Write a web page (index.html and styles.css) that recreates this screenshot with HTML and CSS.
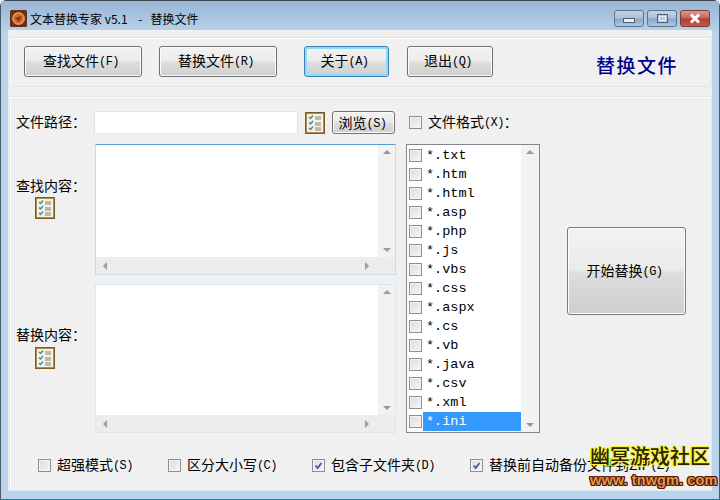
FILE: index.html
```html
<!DOCTYPE html>
<html lang="zh">
<head>
<meta charset="utf-8">
<title>文本替换专家</title>
<link rel="stylesheet" href="styles.css">
</head>
<body>
<svg class="defs" width="0" height="0">
  <symbol id="list" viewBox="0 0 20 22">
    <rect x="0.5" y="0.5" width="19" height="21" fill="#f4f1e6" stroke="#7d5a26"/>
    <rect x="1.5" y="1.5" width="17" height="19" fill="none" stroke="#b08a4c"/>
    <path d="M4 5l1.500 1.500L8 3.500M4 10.500l1.500 1.500L8 9M4 16l1.500 1.500L8 14.500" fill="none" stroke="#3f8ea6" stroke-width="1.500"/>
    <path d="M10 5h6M10 7h6M10 11h6M10 13h6M10 16h6M10 18h6" stroke="#8a8168" stroke-width="1"/>
  </symbol>
  <symbol id="tick" viewBox="0 0 13 13">
    <path d="M3 6.500l2.500 3L10 3.500" fill="none" stroke="#3d5a9e" stroke-width="2"/>
  </symbol>
</svg>

<div class="window">
  <header class="titlebar">
    <svg class="appicon" width="17" height="17" viewBox="0 0 17 17">
      <rect width="17" height="17" rx="1.500" fill="#6e2c12"/>
      <circle cx="8.500" cy="8.500" r="6.500" fill="#c99a6c"/>
      <circle cx="8.500" cy="8.500" r="4.500" fill="#d9641c"/>
      <path d="M5 8l7-2-3 6z" fill="#8a3c10"/>
    </svg>
    <span class="title">文本替换专家 v5.1 &nbsp;&nbsp;&nbsp;-&nbsp;&nbsp; 替换文件</span>
    <div class="winbtns">
      <div class="winbtn"><i class="glyph-min"></i></div>
      <div class="winbtn"><i class="glyph-max"></i></div>
      <div class="winbtn close">
        <svg width="14" height="11" viewBox="0 0 14 11"><path d="M3 1.500l8 8M11 1.500l-8 8" stroke="#fff" stroke-width="3"/></svg>
      </div>
    </div>
  </header>

  <div class="client">
    <section class="panel toolbar">
      <button class="btn wide">查找文件<span class="l">(F)</span></button>
      <button class="btn wide">替换文件<span class="l">(R)</span></button>
      <button class="btn mid focus">关于<span class="l">(A)</span></button>
      <button class="btn mid">退出<span class="l">(Q)</span></button>
      <div class="pagename">替换文件</div>
    </section>

    <section class="panel main">
      <div class="pathrow">
        <span class="label">文件路径：</span>
        <div class="input"></div>
        <svg class="listicon"><use href="#list"/></svg>
        <button class="browse">浏览<span class="l">(S)</span></button>
        <label class="check fmt"><i class="box"></i><span>文件格式<span class="l">(X)</span>：</span></label>
      </div>

      <div class="body">
        <div class="editors">
          <div class="editrow first">
            <div class="side">
              <span class="label">查找内容：</span>
              <svg class="listicon"><use href="#list"/></svg>
            </div>
            <div class="editor active">
              <div class="text"></div>
              <div class="vbar"><i class="up"></i><i class="down"></i></div>
              <div class="hbar"><i class="left"></i><i class="right"></i></div>
            </div>
          </div>
          <div class="editrow second">
            <div class="side">
              <span class="label">替换内容：</span>
              <svg class="listicon"><use href="#list"/></svg>
            </div>
            <div class="editor">
              <div class="text"></div>
              <div class="vbar"><i class="up"></i><i class="down"></i></div>
              <div class="hbar"><i class="left"></i><i class="right"></i></div>
            </div>
          </div>
        </div>

        <div class="types">
          <ul class="typelist">
            <li><i class="box"></i><span>*.txt</span></li>
            <li><i class="box"></i><span>*.htm</span></li>
            <li><i class="box"></i><span>*.html</span></li>
            <li><i class="box"></i><span>*.asp</span></li>
            <li><i class="box"></i><span>*.php</span></li>
            <li><i class="box"></i><span>*.js</span></li>
            <li><i class="box"></i><span>*.vbs</span></li>
            <li><i class="box"></i><span>*.css</span></li>
            <li><i class="box"></i><span>*.aspx</span></li>
            <li><i class="box"></i><span>*.cs</span></li>
            <li><i class="box"></i><span>*.vb</span></li>
            <li><i class="box"></i><span>*.java</span></li>
            <li><i class="box"></i><span>*.csv</span></li>
            <li><i class="box"></i><span>*.xml</span></li>
            <li class="selected"><i class="box"></i><span>*.ini</span></li>
          </ul>
          <div class="listbar"><i class="up"></i><i class="down"></i></div>
        </div>

        <div class="startwrap">
          <button class="start">开始替换<span class="l">(G)</span></button>
        </div>
      </div>

      <div class="options">
        <label class="check opt1"><i class="box"></i><span>超强模式<span class="l">(S)</span></span></label>
        <label class="check opt2"><i class="box"></i><span>区分大小写<span class="l">(C)</span></span></label>
        <label class="check opt3"><i class="box"><svg><use href="#tick"/></svg></i><span>包含子文件夹<span class="l">(D)</span></span></label>
        <label class="check"><i class="box"><svg><use href="#tick"/></svg></i><span>替换前自动备份文件到ZIP<span class="l">(Z)</span></span></label>
      </div>
    </section>
  </div>

  <div class="watermark">
    <div class="wm-cn">幽冥游戏社区</div>
    <div class="wm-en">www. tnwgm. com</div>
  </div>
</div>
</body>
</html>
```

FILE: styles.css
```css
* { box-sizing: border-box; }
html, body { margin: 0; padding: 0; }
body {
  width: 720px;
  height: 500px;
  overflow: hidden;
  font-family: "Noto Sans CJK SC", "Liberation Sans", sans-serif;
  font-size: 14px;
  color: #000;
  background: #fff;
}
.defs { position: absolute; }
i { display: block; }

.window {
  position: relative;
  width: 720px;
  height: 500px;
  padding: 0 7px 7px 7px;
  background: #b9d3ea;
  border: 1px solid #4a5a66;
  border-top-color: #3c4650;
  border-bottom-color: #1a8a9c;
  border-radius: 6px 6px 0 0;
}
.titlebar {
  display: flex;
  align-items: flex-start;
  height: 29px;
  margin: 0 -7px;
  padding: 9px 6px 0 9px;
  background: linear-gradient(#99b5d3, #b6d0e9);
}
.appicon { flex: none; }
.title {
  margin-left: 3px;
  font-size: 12px;
  line-height: 17px;
  white-space: pre;
}
.winbtns { display: flex; margin-left: auto; margin-right: 3px; gap: 3px; }
.winbtn {
  display: flex;
  align-items: center;
  justify-content: center;
  width: 30px;
  height: 17px;
  border: 1px solid #5f7387;
  border-radius: 3px;
  background: linear-gradient(#c3d4e5 0, #a9c1d9 48%, #8aa8c6 52%, #a9c8e2 100%);
}
.winbtn.close {
  border-color: #7c3a34;
  background: linear-gradient(#d99c92 0, #c5655a 48%, #b13a2e 52%, #c6584a 100%);
}
.glyph-min {
  width: 12px; height: 5px; margin-top: 4px;
  background: #e9eef4; border: 1px solid #4f5f70;
}
.glyph-max {
  width: 11px; height: 9px;
  border: 1px solid #4f5f70; outline: 1px solid #e4ecf4; outline-offset: -3px;
  background: #b9cde0;
}

.client {
  height: 461px;
  background: #f0f0f0;
  padding: 7px 0 0 1px;
  display: flex;
  flex-direction: column;
  gap: 9px;
}
.panel {
  background: #f0f0f0;
  border: 1px solid #dfe7ee;
  border-radius: 2px;
  box-shadow: inset 1px 1px 0 #fff;
}
.toolbar {
  position: relative;
  display: flex;
  align-items: flex-start;
  height: 50px;
  padding: 8px 0 0 14px;
}
.btn {
  height: 31px;
  padding: 0 4px 3px 0;
  font: inherit;
  color: #000;
  border: 1px solid #707070;
  border-radius: 3px;
  background: linear-gradient(#f2f2f2 0, #ebebeb 48%, #dddddd 52%, #cfcfcf 100%);
  box-shadow: inset 0 0 0 1px #fcfcfc;
}
.btn.wide { width: 118px; margin-right: 17px; }
.btn.mid { width: 85px; margin-right: 18px; }
.btn.wide + .btn.mid { margin-left: 10px; }
.btn.mid + .btn.mid { width: 86px; }
.btn.focus { border-color: #3c7fb1; box-shadow: inset 0 0 0 2px #8fdcf8; }
.l {
  font-family: "Liberation Mono", monospace;
  font-size: 12px;
  letter-spacing: -0.600px;
  position: relative;
  top: -1px;
}
.pagename {
  position: absolute;
  left: 586px;
  top: 13px;
  color: #00008b;
  font-size: 19px;
  line-height: 27px;
  letter-spacing: 1.500px;
  font-weight: 500;
}

.main {
  flex: 1;
  padding: 14px 0 0 6px;
}
.label { white-space: nowrap; line-height: 20px; }
.pathrow {
  display: flex;
  align-items: center;
  height: 23px;
}
.pathrow .label { width: 78px; padding-bottom: 3px; line-height: 20px; height: 23px; }
.input {
  width: 204px;
  height: 23px;
  background: #fff;
  border: 1px solid #e2e3ea;
  border-radius: 2px;
}
.listicon {
  display: block;
  flex: none;
  width: 20px;
  height: 22px;
}
.pathrow .listicon { margin-left: 7px; }
.browse {
  width: 63px;
  height: 23px;
  margin-left: 7px;
  padding: 0 2px 3px 0;
  font: inherit;
  color: #000;
  border: 1px solid #707070;
  border-radius: 3px;
  background: linear-gradient(#f2f2f2 0, #ebebeb 48%, #dddddd 52%, #cfcfcf 100%);
  box-shadow: inset 0 0 0 1px #fcfcfc;
}
.check {
  display: flex;
  align-items: center;
  gap: 6px;
  white-space: nowrap;
}
.check > span { padding-bottom: 3px; }
.fmt { margin-left: 14px; }
.box {
  flex: none;
  width: 13px;
  height: 13px;
  border: 1px solid #8e8f8f;
  background: linear-gradient(135deg, #dcdcdc, #f6f6f6);
  box-shadow: inset 0 0 0 1px #f4f4f4;
}
.box svg { display: block; width: 11px; height: 11px; }

.body {
  display: flex;
  align-items: flex-start;
  margin-top: 10px;
  height: 290px;
}
.editors {
  display: flex;
  flex-direction: column;
  gap: 9px;
  width: 380px;
}
.editrow { display: flex; }
.editrow.first { height: 131px; }
.editrow.second { height: 149px; }
.side {
  display: flex;
  flex-direction: column;
  align-items: flex-start;
  width: 79px;
}
.side .listicon { margin-left: 19px; }
.first .side { padding-top: 31px; }
.first .listicon { margin-top: 2px; }
.second .side { padding-top: 40px; }
.second .listicon { margin-top: 3px; }
.editor {
  width: 301px;
  display: grid;
  grid-template-columns: 1fr 17px;
  grid-template-rows: 1fr 17px;
  border: 1px solid #dbe6ee;
  background: #fff;
}
.editor.active {
  border-color: #c4dcee;
  border-top-color: #5a9ccb;
}
.vbar, .hbar, .listbar {
  display: flex;
  justify-content: space-between;
  align-items: center;
  background: #f2f2f2;
}
.vbar { flex-direction: column; padding: 5px 0; grid-column: 2; grid-row: 1; }
.hbar { grid-column: 1 / span 2; grid-row: 2; padding: 0 26px 0 7px; background: #ececec; }
.listbar { flex-direction: column; width: 18px; padding: 5px 0; }
.up { border: 4px solid transparent; border-top: 0; border-bottom: 4px solid #9a9a9a; }
.down { border: 4px solid transparent; border-bottom: 0; border-top: 4px solid #9a9a9a; }
.left { border: 4px solid transparent; border-left: 0; border-right: 4px solid #9a9a9a; }
.right { border: 4px solid transparent; border-right: 0; border-left: 4px solid #9a9a9a; }

.types {
  display: flex;
  width: 134px;
  height: 289px;
  margin-left: 10px;
  border: 1px solid #82868a;
  background: #fff;
}
.typelist {
  flex: 1;
  margin: 0;
  padding: 1px 0 0 2px;
  list-style: none;
}
.typelist li {
  display: flex;
  align-items: center;
  gap: 1px;
  height: 19px;
  font-family: "Liberation Mono", monospace;
  font-size: 13.500px;
}
.typelist li span { flex: 1; height: 19px; line-height: 19px; padding-left: 3px; }
.selected span { background: #3399ff; color: #fff; }

.startwrap {
  padding: 83px 0 0 27px;
}
.start {
  width: 119px;
  height: 88px;
  padding: 0 4px 3px 0;
  font: inherit;
  color: #000;
  border: 1px solid #7b7b7b;
  border-radius: 3px;
  background: linear-gradient(#f2f2f2 0, #ebebeb 48%, #dddddd 52%, #cfcfcf 100%);
  box-shadow: inset 0 0 0 1px #fcfcfc;
}

.options {
  display: flex;
  padding-left: 22px;
  margin-top: 21px;
  height: 20px;
}
.opt1 { width: 130px; }
.opt2 { width: 144px; }
.opt3 { width: 158px; }

.watermark {
  position: absolute;
  left: 589px;
  top: 442px;
  width: 125px;
  pointer-events: none;
  white-space: nowrap;
}
.wm-cn {
  font-size: 20px;
  line-height: 25px;
  font-weight: 500;
  color: #2b2200;
  text-shadow: 1px 0 0 #f6f23c, -1px 0 0 #f6f23c, 0 1px 0 #f6f23c, 0 -1px 0 #f6f23c, 1px 1px 0 #f6f23c, -1px -1px 0 #f6f23c, 1px -1px 0 #f6f23c, -1px 1px 0 #f6f23c;
}
.wm-en {
  margin-top: 3px;
  font-family: "Liberation Sans", sans-serif;
  font-size: 14.500px;
  line-height: 18px;
  font-weight: 700;
  letter-spacing: 0.100px;
  color: #d89a4a;
  text-shadow: 1px 0 0 #5c1408, -1px 0 0 #5c1408, 0 1px 0 #5c1408, 0 -1px 0 #5c1408, 1px 1px 0 #5c1408, -1px -1px 0 #5c1408, 1px -1px 0 #5c1408, -1px 1px 0 #5c1408;
}
```
